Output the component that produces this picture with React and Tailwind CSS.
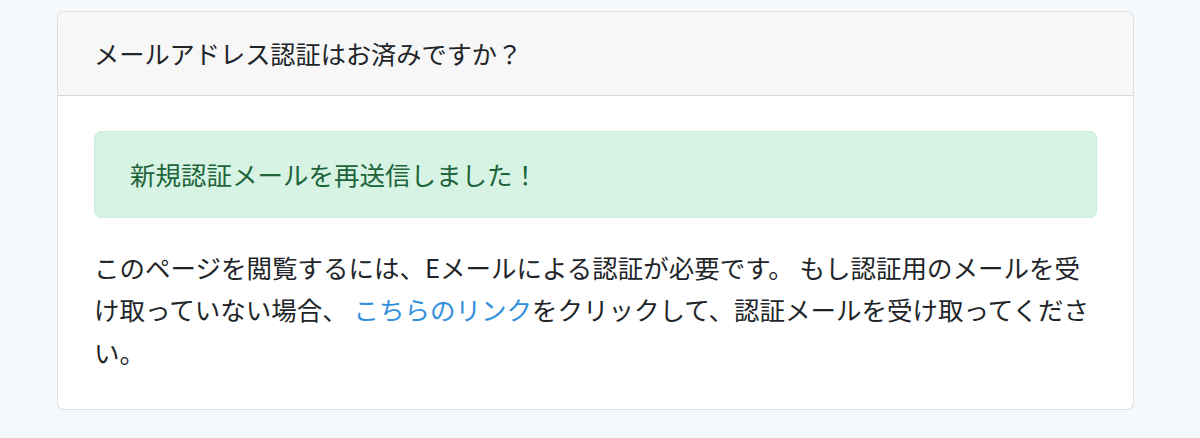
import React from 'react';

/* ── Email verification card ── */
const VerifyCard = () => {
  return (
    <div className="w-[1077px] rounded-[7px] border border-[rgba(0,0,0,0.125)] bg-white overflow-hidden">
      {/* Header */}
      <div className="bg-[#f7f7f7] border-b border-[rgba(0,0,0,0.125)] px-[36px] py-[21px] leading-[41px]">
        メールアドレス認証はお済みですか？
      </div>

      {/* Body */}
      <div className="pl-[36px] pr-[35px] pt-[35px] pb-[36px] text-[25.5px]">
        <div
          role="alert"
          className="mb-[28px] mr-[1px] rounded-[7px] border border-[#c7eed8] bg-[#d7f3e3] px-[35px] py-[21px] leading-[42.5px] text-[#1d643b]"
        >
          新規認証メールを再送信しました！
        </div>
        <div className="leading-[42.5px]">
          このページを閲覧するには、Eメールによる認証が必要です。 もし認証用のメールを受け取っていない場合、{' '}
          <a href="#resend" className="text-[#3490dc]">
            こちらのリンク
          </a>
          をクリックして、認証メールを受け取ってください。
        </div>
      </div>
    </div>
  );
};

export default function App() {
  return (
    <div className="min-h-screen bg-[#f6f9fc] pt-[11px] pl-[57px] text-[25.2px] text-[#212529] font-['Noto_Sans_CJK_JP','Noto_Sans',sans-serif]">
      <VerifyCard />
    </div>
  );
}
